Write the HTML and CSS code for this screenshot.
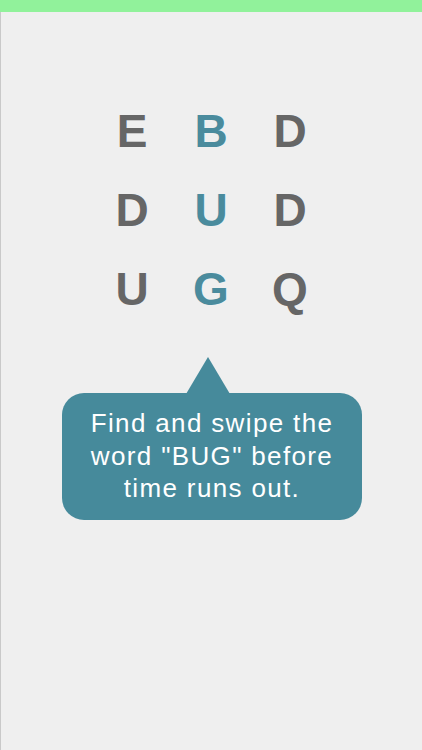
FILE: index.html
```html
<!DOCTYPE html>
<html>
<head>
<meta charset="utf-8">
<link rel="stylesheet" href="styles.css">
</head>
<body>
<div class="topbar"></div>
<main class="screen">
  <div class="grid">
    <span class="cell">E</span><span class="cell hl">B</span><span class="cell">D</span>
    <span class="cell">D</span><span class="cell hl">U</span><span class="cell">D</span>
    <span class="cell">U</span><span class="cell hl">G</span><span class="cell">Q</span>
  </div>
  <div class="tip">
    <div class="tail"></div>
    <div class="bubble">Find and swipe the<br>word "BUG" before<br>time runs out.</div>
  </div>
</main>
</body>
</html>
```
FILE: styles.css
```css
html, body {
  margin: 0;
  padding: 0;
}
body {
  background: #efefef;
  width: 422px;
  height: 750px;
  overflow: hidden;
  font-family: "Liberation Sans", Arial, sans-serif;
}
.topbar {
  height: 12px;
  background: #91f29b;
}
.screen {
  height: 738px;
  border-left: 1px solid #c9c9c9;
  box-sizing: border-box;
  display: flex;
  flex-direction: column;
  align-items: center;
}
.grid {
  margin-top: 80px;
  margin-left: -1px;
  display: grid;
  grid-template-columns: repeat(3, 79px);
  grid-auto-rows: 79px;
}
.cell {
  font-size: 46px;
  font-weight: bold;
  line-height: 79px;
  text-align: center;
  color: #666666;
}
.cell.hl {
  color: #4a8b9d;
}
.tip {
  margin-top: 28px;
  display: flex;
  flex-direction: column;
  align-items: center;
  margin-left: 1px;
}
.tail {
  width: 44px;
  height: 37px;
  background: #468a9b;
  clip-path: polygon(50% 0, 100% 100%, 0 100%);
  margin-left: -8px;
  margin-bottom: -1px;
}
.bubble {
  width: 300px;
  box-sizing: border-box;
  background: #468a9b;
  border-radius: 22px;
  padding: 14px 0 15px;
  color: #ffffff;
  font-size: 26px;
  letter-spacing: 1.35px;
  line-height: 32.5px;
  text-align: center;
}
```
